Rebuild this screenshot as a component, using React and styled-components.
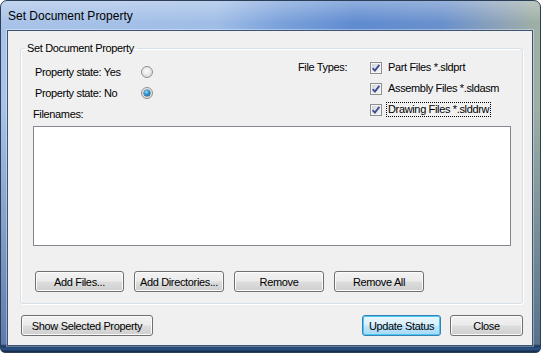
import React from "react"
import styled, { createGlobalStyle, css } from "styled-components"

const GlobalStyle = createGlobalStyle`
  html, body {
    margin: 0;
    padding: 0;
    background: #ffffff;
  }
  body {
    font-family: "Liberation Sans", Arial, sans-serif;
  }
`

const Window = styled.div`
  width: 541px;
  height: 353px;
  box-sizing: border-box;
  display: flex;
  flex-direction: column;
  border-radius: 7px 7px 5px 5px;
  border: 1px solid #2c3f58;
  overflow: hidden;
  background:
    linear-gradient(to top, #14263f 0, #2b548a 3px, #1c3656 6px, rgba(28, 54, 86, 0) 8px),
    linear-gradient(to bottom, rgba(255, 255, 255, 0.3) 0, rgba(255, 255, 255, 0) 22px),
    linear-gradient(to bottom, rgba(0, 0, 0, 0) 30%, rgba(25, 60, 120, 0.55) 100%),
    linear-gradient(90deg, #a9c3e8 0%, #a0bde6 40%, #7aa1da 52%, #5f8bd0 66%, #6a91cc 82%, #8ea3b8 93%, #a0b0a2 100%);
`

const TitleBar = styled.div`
  height: 29px;
  display: flex;
  align-items: center;
  padding: 0 0 0 7px;
  font-size: 12px;
  color: #000;
`

const Client = styled.div`
  flex: 1;
  margin: 0 7px 6px 6px;
  background: #f0f0f0;
  border: 1px solid #3d5373;
  box-shadow: 0 0 0 1px rgba(255, 255, 255, 0.35);
  display: flex;
  flex-direction: column;
  padding: 10px 9px 0 12px;
  font-size: 11px;
  letter-spacing: -0.35px;
  color: #000;
`

const GroupBox = styled.fieldset`
  margin: 0;
  padding: 0 0 11px 0;
  border: 1px solid #d5dfe5;
  border-radius: 3px;
  box-shadow: inset 1px 1px 0 #fff, 1px 1px 0 #fff;
  min-width: 0;
  display: flex;
  flex-direction: column;
`

const Legend = styled.legend`
  margin-left: 4px;
  padding: 0 3px 0 2px;
  line-height: 14px;
`

const TopSection = styled.div`
  display: flex;
`

const LeftColumn = styled.div`
  width: 277px;
  box-sizing: border-box;
  display: flex;
  flex-direction: column;
  padding: 6px 0 0 12px;
`

const OptionRow = styled.label`
  display: flex;
  align-items: center;
  height: 21px;
  margin-left: 2px;
`

const OptionText = styled.span`
  width: 106px;
`

const Radio = styled.span`
  width: 12px;
  height: 12px;
  box-sizing: border-box;
  border-radius: 50%;
  border: 1px solid #8d9092;
  background: radial-gradient(circle at 45% 40%, #fbfbfb 0%, #e9e9e9 45%, #cfd0d1 100%);
  display: flex;
  align-items: center;
  justify-content: center;

  ${(p) =>
    p.checked &&
    css`
      &::after {
        content: "";
        width: 6px;
        height: 6px;
        border-radius: 50%;
        background: radial-gradient(circle at 40% 35%, #8fe4ff 0%, #2a8fd1 45%, #0d4f8f 100%);
        box-shadow: 0 0 0 0.5px #143d66;
      }
    `}
`

const FieldLabel = styled.div`
  line-height: 13px;
  margin-top: 5px;
`

const RightColumn = styled.div`
  display: flex;
  padding-top: 2px;
`

const TypesLabel = styled.div`
  width: 72px;
  height: 21px;
  line-height: 21px;
`

const CheckList = styled.div`
  display: flex;
  flex-direction: column;
`

const CheckRow = styled.label`
  display: flex;
  align-items: center;
  height: 21px;
  gap: 4px;
`

const CheckBox = styled.span`
  width: 12px;
  height: 12px;
  box-sizing: border-box;
  border: 1px solid #8e8f8f;
  background: linear-gradient(135deg, #cbcfd5 0%, #e8ebef 55%, #f6f6f6 100%);
  box-shadow: inset 0 0 0 1px #f4f4f4;
  display: flex;
  align-items: center;
  justify-content: center;
`

const CheckText = styled.span`
  padding: 0 1px;
  line-height: 13px;
  border: 1px dotted ${(p) => (p.focused ? "#000" : "transparent")};
`

const ListBox = styled.div`
  height: 120px;
  box-sizing: border-box;
  margin: 5px 11px 0 12px;
  background: #fff;
  border: 1px solid #828790;
`

const ButtonRow = styled.div`
  display: flex;
  gap: ${(p) => p.gap || 10}px;
  margin: ${(p) => p.margin};
`

const Button = styled.button`
  width: ${(p) => p.w}px;
  height: 21px;
  box-sizing: border-box;
  padding: 0;
  font-family: "Liberation Sans", Arial, sans-serif;
  font-size: 11px;
  letter-spacing: -0.35px;
  color: #000;
  border-radius: 3px;
  border: 1px solid #707070;
  background: linear-gradient(#f2f2f2 0%, #ebebeb 48%, #dddddd 52%, #cfcfcf 100%);
  box-shadow: inset 0 0 0 1px #fbfbfb;

  ${(p) =>
    p.primary &&
    css`
      border-color: #3c7fb1;
      background: linear-gradient(#eaf6fd 0%, #d9f0fc 48%, #bee6fd 52%, #a7d9f5 100%);
      box-shadow: inset 0 0 0 1px #48c8f5;
    `}
`

const Spacer = styled.div`
  flex: 1;
`

const Check = () => (
  <svg width="10" height="10" viewBox="0 0 10 10">
    <path d="M1.6 5.2 L3.9 7.6 L8.4 1.9" fill="none" stroke="#3e4d92" strokeWidth="1.9" />
  </svg>
)

const fileTypes = [
  { key: "prt", label: "Part Files *.sldprt" },
  { key: "asm", label: "Assembly Files *.sldasm" },
  { key: "drw", label: "Drawing Files *.slddrw", focused: true },
]

const App = () => {
  return (
    <>
      <GlobalStyle />
      <Window>
        <TitleBar>Set Document Property</TitleBar>
        <Client>
          <GroupBox>
            <Legend>Set Document Property</Legend>
            <TopSection>
              <LeftColumn>
                <OptionRow>
                  <OptionText>Property state: Yes</OptionText>
                  <Radio />
                </OptionRow>
                <OptionRow>
                  <OptionText>Property state: No</OptionText>
                  <Radio checked />
                </OptionRow>
                <FieldLabel>Filenames:</FieldLabel>
              </LeftColumn>
              <RightColumn>
                <TypesLabel>File Types:</TypesLabel>
                <CheckList>
                  {fileTypes.map((t) => (
                    <CheckRow key={t.key}>
                      <CheckBox>
                        <Check />
                      </CheckBox>
                      <CheckText focused={t.focused}>{t.label}</CheckText>
                    </CheckRow>
                  ))}
                </CheckList>
              </RightColumn>
            </TopSection>
            <ListBox />
            <ButtonRow margin="25px 0 0 14px">
              <Button w={89}>Add Files...</Button>
              <Button w={90}>Add Directories...</Button>
              <Button w={90}>Remove</Button>
              <Button w={90}>Remove All</Button>
            </ButtonRow>
          </GroupBox>
          <ButtonRow margin="11px 0 0 1px" gap={9}>
            <Button w={132}>Show Selected Property</Button>
            <Spacer />
            <Button w={79} primary>
              Update Status
            </Button>
            <Button w={73}>Close</Button>
          </ButtonRow>
        </Client>
      </Window>
    </>
  )
}

export default App
